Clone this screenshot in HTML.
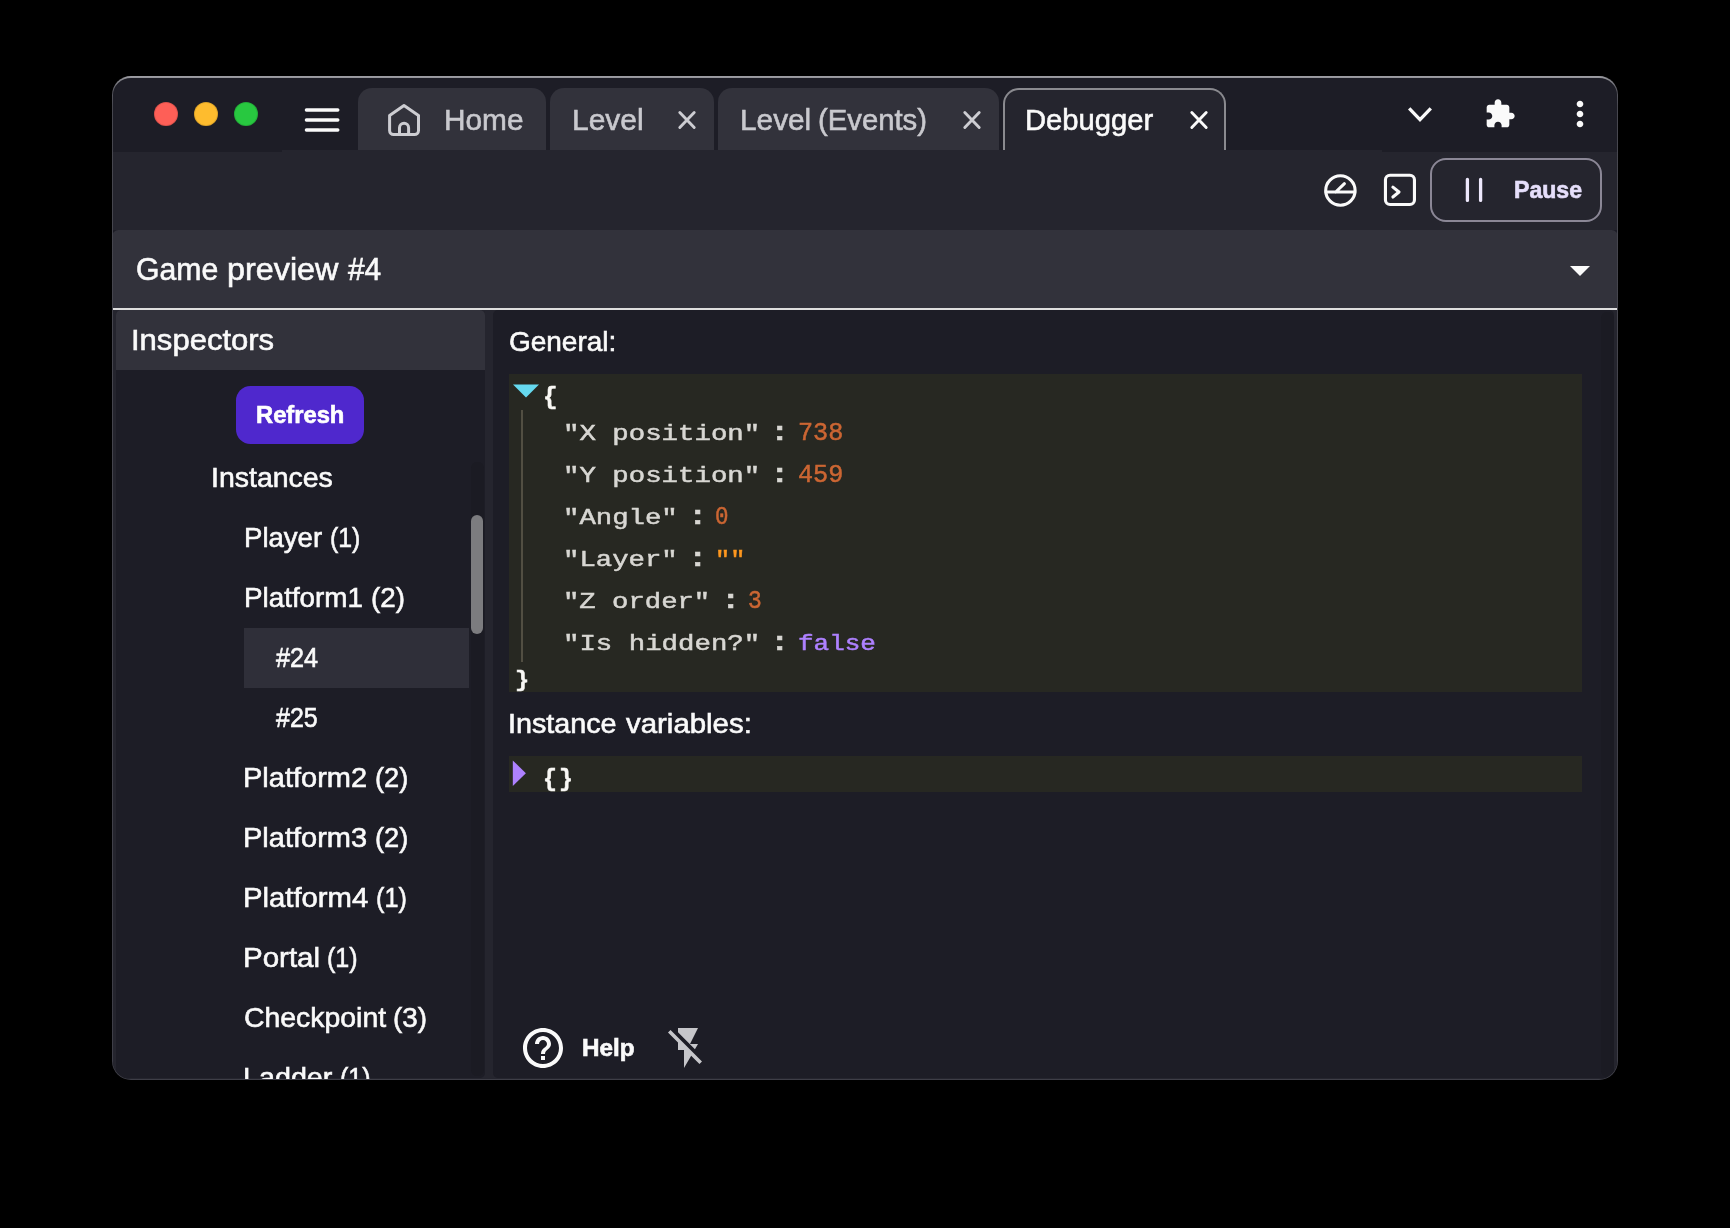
<!DOCTYPE html>
<html lang="en">
<head>
<meta charset="utf-8">
<title>GDevelop - Debugger</title>
<style>
html,body{margin:0;padding:0;background:#000;}
body{width:1730px;height:1228px;position:relative;overflow:hidden;font-family:"Liberation Sans",sans-serif;}
#win{position:absolute;left:112px;top:76px;width:1506px;height:1004px;border-radius:19px;overflow:hidden;background:linear-gradient(to bottom,#A0A0A6 0px,#8A8A90 3px,#5A5A62 14px,#47474F 30px,#3E3E47 100%);}
#clip{position:absolute;left:1px;top:2px;right:1px;bottom:1px;border-radius:18px 18px 18px 18px / 17px 17px 18px 18px;overflow:hidden;background:#1D1D26;}
#in{position:absolute;left:-113px;top:-78px;width:1730px;height:1228px;will-change:transform;}
#in div,#in svg,#in span{position:absolute;}
.t{white-space:pre;transform-origin:0 0;display:block;}
.s{font-family:"Liberation Sans",sans-serif;-webkit-text-stroke:0.6px currentColor;}
.m{font-family:"Liberation Mono",monospace;-webkit-text-stroke:0.5px currentColor;}
.tab{background:#32323B;top:88px;height:62px;border-radius:14px 14px 0 0;}
</style>
</head>
<body>
<div id="win"><div id="clip"><div id="in">

<!-- toolbar background -->
<div style="left:112px;top:150px;width:1506px;height:80px;background:#25252E"></div>
<!-- title-bar drag regions extend 2px lower -->
<div style="left:112px;top:150px;width:170px;height:2px;background:#1D1D26"></div>
<div style="left:1382px;top:150px;width:236px;height:2px;background:#1D1D26"></div>

<!-- traffic lights -->
<div style="left:154px;top:102px;width:24px;height:24px;border-radius:50%;background:#FE5F57;box-shadow:inset 0 0 0 1px rgba(0,0,0,.12)"></div>
<div style="left:194px;top:102px;width:24px;height:24px;border-radius:50%;background:#FEBC2E;box-shadow:inset 0 0 0 1px rgba(0,0,0,.12)"></div>
<div style="left:234px;top:102px;width:24px;height:24px;border-radius:50%;background:#28C840;box-shadow:inset 0 0 0 1px rgba(0,0,0,.12)"></div>

<!-- hamburger -->
<svg style="left:300px;top:100px" width="44" height="40" viewBox="300 100 44 40"><g stroke="#FAFAFA" stroke-width="3.4" stroke-linecap="round"><path d="M306.4 110H337.8M306.4 120H337.8M306.4 130H337.8"/></g></svg>

<!-- tabs -->
<div class="tab" style="left:358px;width:188px"></div>
<div class="tab" style="left:550px;width:164px"></div>
<div class="tab" style="left:718px;width:280.5px"></div>
<div style="left:1003px;top:88px;width:223px;height:62px;box-sizing:border-box;background:#25252E;border:2px solid #8A8A8F;border-bottom:none;border-radius:16px 16px 0 0"></div>

<!-- home icon -->
<svg style="left:380px;top:98px" width="48" height="44" viewBox="380 98 48 44"><g fill="none" stroke="#CDCDD2" stroke-width="3" stroke-linejoin="round" stroke-linecap="round">
<path d="M389.6 115.6L404 105.6L418.5 115.6V130.6a4 4 0 0 1 -4 4H393.6a4 4 0 0 1 -4 -4Z"/>
<path d="M399.5 134.6V127.8a4.55 4.55 0 0 1 9.1 0V134.6"/></g></svg>

<!-- tab close icons -->
<svg style="left:670px;top:104px" width="34" height="32" viewBox="-17 -16 34 32"><path d="M-7.2 -7.4L7.2 7.4M7.2 -7.4L-7.2 7.4" stroke="#CDCDD2" stroke-width="2.9" stroke-linecap="round"/></svg>
<svg style="left:954.5px;top:104px" width="34" height="32" viewBox="-17 -16 34 32"><path d="M-7.2 -7.4L7.2 7.4M7.2 -7.4L-7.2 7.4" stroke="#CDCDD2" stroke-width="2.9" stroke-linecap="round"/></svg>
<svg style="left:1182px;top:104px" width="34" height="32" viewBox="-17 -16 34 32"><path d="M-7.2 -7.4L7.2 7.4M7.2 -7.4L-7.2 7.4" stroke="#FAFAFA" stroke-width="2.9" stroke-linecap="round"/></svg>

<!-- chevron down -->
<svg style="left:1400px;top:98px" width="40" height="32" viewBox="1400 98 40 32"><path d="M1409.2 108.3L1420 119.6L1430.8 108.3" fill="none" stroke="#FAFAFA" stroke-width="3.3"/></svg>
<!-- extension (puzzle) icon -->
<svg style="left:1484px;top:97.5px" width="32" height="32" viewBox="0 0 24 24"><path fill="#FAFAFA" d="M20.5 11H19V7c0-1.1-.9-2-2-2h-4V3.5C13 2.12 11.88 1 10.5 1S8 2.12 8 3.5V5H4c-1.1 0-1.99.9-1.99 2v3.8H3.5c1.49 0 2.7 1.21 2.7 2.7s-1.21 2.7-2.7 2.7H2V20c0 1.1.9 2 2 2h3.8v-1.5c0-1.49 1.21-2.7 2.7-2.7 1.49 0 2.7 1.21 2.7 2.7V22H17c1.1 0 2-.9 2-2v-4h1.5c1.38 0 2.5-1.12 2.5-2.5S21.88 11 20.5 11z"/></svg>
<!-- more vert -->
<svg style="left:1560px;top:94px" width="40" height="40" viewBox="0 0 24 24"><path fill="#FAFAFA" d="M12 8c1.1 0 2-.9 2-2s-.9-2-2-2-2 .9-2 2 .9 2 2 2zm0 2c-1.1 0-2 .9-2 2s.9 2 2 2 2-.9 2-2-.9-2-2-2zm0 6c-1.1 0-2 .9-2 2s.9 2 2 2 2-.9 2-2-.9-2-2-2z"/></svg>

<!-- toolbar icons -->
<svg style="left:1320px;top:170px" width="42" height="42" viewBox="1320 170 42 42"><g fill="none" stroke="#FAFAFA" stroke-width="3.1" stroke-linecap="round">
<circle cx="1340.4" cy="190.5" r="14.7"/><path d="M1326 192H1354.8M1335.7 192L1344.4 183.7"/></g></svg>
<svg style="left:1380px;top:170px" width="40" height="40" viewBox="1380 170 40 40"><g fill="none" stroke="#FAFAFA" stroke-width="3.1" stroke-linecap="round" stroke-linejoin="round">
<rect x="1385.45" y="175.25" width="29" height="29.3" rx="4.6"/><path d="M1392.9 187.1L1399 192L1392.9 197"/></g></svg>

<!-- pause button -->
<div style="left:1430px;top:158px;width:172px;height:64px;box-sizing:border-box;border:2px solid #8B8796;border-radius:16px"></div>
<svg style="left:1460px;top:172px" width="30" height="36" viewBox="1460 172 30 36"><path d="M1467.4 179.3V200.4M1480.6 179.3V200.4" stroke="#EDE8FC" stroke-width="3.3" stroke-linecap="round"/></svg>

<!-- Game preview selector -->
<div style="left:112px;top:230px;width:1506px;height:78px;background:#32323B;border-radius:6.5px 6.5px 0 0"></div>
<div style="left:112px;top:308px;width:1506px;height:2px;background:#DEDEDE"></div>
<svg style="left:1555.5px;top:246px" width="48" height="48" viewBox="0 0 24 24"><path fill="#FAFAFA" d="M7 10l5 5 5-5z"/></svg>

<!-- editor background / gutters -->
<div style="left:112px;top:310px;width:1506px;height:770px;background:#25252E"></div>
<!-- left panel -->
<div style="left:116px;top:310px;width:369px;height:768px;background:#1D1D26;border-radius:5px"></div>
<div style="left:116px;top:310px;width:369px;height:60px;background:#32323B;border-radius:5px 5px 0 0"></div>
<!-- right panel -->
<div style="left:493px;top:310px;width:1121px;height:768px;background:#1D1D26;border-radius:5px"></div>
<div style="left:1600.5px;top:311.5px;width:13px;height:765px;border-radius:6px;background:#1B1B23"></div>

<!-- refresh button -->
<div style="left:236px;top:386px;width:128px;height:58px;background:#4F28CD;border-radius:14.5px"></div>
<!-- selected row -->
<div style="left:244px;top:628px;width:224.5px;height:60px;background:#2F2F39"></div>
<!-- scrollbar -->
<div style="left:471px;top:462px;width:12.5px;height:614px;border-radius:6px;background:#1B1B23"></div>
<div style="left:471px;top:515px;width:12px;height:119px;border-radius:6px;background:#7C7C7F"></div>

<!-- JSON boxes -->
<div style="left:509px;top:374px;width:1073px;height:318px;background:#272822"></div>
<div style="left:509px;top:756px;width:1073px;height:36px;background:#272822"></div>
<div style="left:521px;top:410px;width:2px;height:252px;background:#524F43"></div>
<svg style="left:509px;top:380px" width="36" height="24" viewBox="509 380 36 24"><path d="M513 384.4H539L526 397.4Z" fill="#66D9EF"/></svg>
<svg style="left:509px;top:756px" width="24" height="36" viewBox="509 756 24 36"><path d="M512.8 760.4L525.9 773.2L512.8 786Z" fill="#AE81FF"/></svg>

<!-- help + flash off -->
<svg style="left:519px;top:1024px" width="48" height="48" viewBox="0 0 24 24"><path fill="#FAFAFA" d="M11 18h2v-2h-2v2zm1-16C6.48 2 2 6.48 2 12s4.48 10 10 10 10-4.48 10-10S17.52 2 12 2zm0 18c-4.41 0-8-3.59-8-8s3.59-8 8-8 8 3.59 8 8-3.59 8-8 8zm0-14c-2.21 0-4 1.79-4 4h2c0-1.1.9-2 2-2s2 .9 2 2c0 2-3 1.75-3 5h2c0-2.25 3-2.5 3-5 0-2.21-1.79-4-4-4z"/></svg>
<svg style="left:664px;top:1024px" width="48" height="48" viewBox="0 0 24 24"><path fill="#C6C6CA" d="M3.27 3L2 4.27l5 5V13h3v9l3.58-6.14L17.73 20 19 18.73 3.27 3zM17 10h-4l4-8H7v2.18l8.46 8.46L17 10z"/></svg>

<span class="t s" style="left:444.21px;top:105.00px;font-size:30px;line-height:30px;font-weight:400;color:#C9C9CE;transform:scaleX(0.9930)">Home</span>
<span class="t s" style="left:572.00px;top:105.00px;font-size:30px;line-height:30px;font-weight:400;color:#C9C9CE;transform:scaleX(0.9980)">Level</span>
<span class="t s" style="left:740.01px;top:105.00px;font-size:30px;line-height:30px;font-weight:400;color:#C9C9CE;transform:scaleX(0.9933)">Level </span>
<span class="t s" style="left:818.02px;top:105.00px;font-size:30px;line-height:30px;font-weight:400;color:#C9C9CE;transform:scaleX(0.9754)">(Events)</span>
<span class="t s" style="left:1025.45px;top:105.00px;font-size:30px;line-height:30px;font-weight:400;color:#FAFAFA;transform:scaleX(0.9740)">Debugger</span>
<span class="t s" style="left:1513.80px;top:179.00px;font-size:23px;line-height:23px;font-weight:700;color:#E6DFFB;transform:scaleX(1.0034)">Pause</span>
<span class="t s" style="left:136.03px;top:254.00px;font-size:31px;line-height:31px;font-weight:400;color:#FAFAFA;transform:scaleX(0.9735)">Game </span>
<span class="t s" style="left:226.91px;top:254.00px;font-size:31px;line-height:31px;font-weight:400;color:#FAFAFA;transform:scaleX(1.0433)">preview </span>
<span class="t s" style="left:348.00px;top:254.00px;font-size:31px;line-height:31px;font-weight:400;color:#FAFAFA;transform:scaleX(0.9638)">#4</span>
<span class="t s" style="left:130.93px;top:325.00px;font-size:30px;line-height:30px;font-weight:400;color:#FAFAFA;transform:scaleX(1.0340)">Inspectors</span>
<span class="t s" style="left:256.17px;top:404.00px;font-size:23px;line-height:23px;font-weight:700;color:#FFFFFF;transform:scaleX(1.0312)">Refresh</span>
<span class="t s" style="left:211.47px;top:464.00px;font-size:28px;line-height:28px;font-weight:400;color:#FAFAFA;transform:scaleX(1.0167)">Instances</span>
<span class="t s" style="left:243.93px;top:524.00px;font-size:28px;line-height:28px;font-weight:400;color:#FAFAFA;transform:scaleX(0.9839)">Player </span>
<span class="t s" style="left:329.91px;top:524.00px;font-size:28px;line-height:28px;font-weight:400;color:#FAFAFA;transform:scaleX(0.8872)">(1)</span>
<span class="t s" style="left:243.61px;top:584.00px;font-size:28px;line-height:28px;font-weight:400;color:#FAFAFA;transform:scaleX(0.9928)">Platform1 </span>
<span class="t s" style="left:371.01px;top:584.00px;font-size:28px;line-height:28px;font-weight:400;color:#FAFAFA;transform:scaleX(0.9907)">(2)</span>
<span class="t s" style="left:276.00px;top:644.00px;font-size:28px;line-height:28px;font-weight:400;color:#FAFAFA;transform:scaleX(0.9015)">#24</span>
<span class="t s" style="left:276.00px;top:704.00px;font-size:28px;line-height:28px;font-weight:400;color:#FAFAFA;transform:scaleX(0.8928)">#25</span>
<span class="t s" style="left:243.43px;top:764.00px;font-size:28px;line-height:28px;font-weight:400;color:#FAFAFA;transform:scaleX(1.0354)">Platform2 </span>
<span class="t s" style="left:374.53px;top:764.00px;font-size:28px;line-height:28px;font-weight:400;color:#FAFAFA;transform:scaleX(0.9719)">(2)</span>
<span class="t s" style="left:243.43px;top:824.00px;font-size:28px;line-height:28px;font-weight:400;color:#FAFAFA;transform:scaleX(1.0354)">Platform3 </span>
<span class="t s" style="left:374.53px;top:824.00px;font-size:28px;line-height:28px;font-weight:400;color:#FAFAFA;transform:scaleX(0.9719)">(2)</span>
<span class="t s" style="left:243.41px;top:884.00px;font-size:28px;line-height:28px;font-weight:400;color:#FAFAFA;transform:scaleX(1.0456)">Platform4 </span>
<span class="t s" style="left:375.50px;top:884.00px;font-size:28px;line-height:28px;font-weight:400;color:#FAFAFA;transform:scaleX(0.8998)">(1)</span>
<span class="t s" style="left:243.39px;top:944.00px;font-size:28px;line-height:28px;font-weight:400;color:#FAFAFA;transform:scaleX(1.0540)">Portal </span>
<span class="t s" style="left:326.70px;top:944.00px;font-size:28px;line-height:28px;font-weight:400;color:#FAFAFA;transform:scaleX(0.8967)">(1)</span>
<span class="t s" style="left:243.59px;top:1004.00px;font-size:28px;line-height:28px;font-weight:400;color:#FAFAFA;transform:scaleX(1.0143)">Checkpoint </span>
<span class="t s" style="left:392.81px;top:1004.00px;font-size:28px;line-height:28px;font-weight:400;color:#FAFAFA;transform:scaleX(0.9938)">(3)</span>
<span class="t s" style="left:243.45px;top:1064.00px;font-size:28px;line-height:28px;font-weight:400;color:#FAFAFA;transform:scaleX(1.0252)">Ladder </span>
<span class="t s" style="left:339.70px;top:1064.00px;font-size:28px;line-height:28px;font-weight:400;color:#FAFAFA;transform:scaleX(0.8967)">(1)</span>
<span class="t s" style="left:508.78px;top:328.00px;font-size:27.5px;line-height:27.5px;font-weight:400;color:#FAFAFA;transform:scaleX(1.0172)">General:</span>
<span class="t s" style="left:508.31px;top:710.00px;font-size:27.5px;line-height:27.5px;font-weight:400;color:#FAFAFA;transform:scaleX(1.0446)">Instance </span>
<span class="t s" style="left:625.90px;top:710.00px;font-size:27.5px;line-height:27.5px;font-weight:400;color:#FAFAFA;transform:scaleX(1.0693)">variables:</span>
<span class="t s" style="left:582.35px;top:1037.00px;font-size:23px;line-height:23px;font-weight:700;color:#FAFAFA;transform:scaleX(1.0535)">Help</span>
<span class="t m" style="left:563.01px;top:424.00px;font-size:22px;line-height:22px;font-weight:400;color:#D8D7D3;transform:scaleX(1.2449)">"X position" </span>
<span class="t m" style="left:770.00px;top:420.00px;font-size:26px;line-height:26px;font-weight:700;color:#D8D7D3;transform:scaleX(1.2400)">: </span>
<span class="t m" style="left:798.19px;top:421.00px;font-size:25px;line-height:25px;font-weight:400;color:#CC6633;transform:scaleX(1.0069)">738</span>
<span class="t m" style="left:563.01px;top:466.00px;font-size:22px;line-height:22px;font-weight:400;color:#D8D7D3;transform:scaleX(1.2449)">"Y position" </span>
<span class="t m" style="left:770.00px;top:462.00px;font-size:26px;line-height:26px;font-weight:700;color:#D8D7D3;transform:scaleX(1.2400)">: </span>
<span class="t m" style="left:798.19px;top:463.00px;font-size:25px;line-height:25px;font-weight:400;color:#CC6633;transform:scaleX(1.0069)">459</span>
<span class="t m" style="left:563.02px;top:508.00px;font-size:22px;line-height:22px;font-weight:400;color:#D8D7D3;transform:scaleX(1.2413)">"Angle" </span>
<span class="t m" style="left:687.60px;top:504.00px;font-size:26px;line-height:26px;font-weight:700;color:#D8D7D3;transform:scaleX(1.2400)">: </span>
<span class="t m" style="left:715.40px;top:505.00px;font-size:25px;line-height:25px;font-weight:400;color:#CC6633;transform:scaleX(0.9000)">0</span>
<span class="t m" style="left:563.02px;top:550.00px;font-size:22px;line-height:22px;font-weight:400;color:#D8D7D3;transform:scaleX(1.2413)">"Layer" </span>
<span class="t m" style="left:687.60px;top:546.00px;font-size:26px;line-height:26px;font-weight:700;color:#D8D7D3;transform:scaleX(1.2400)">: </span>
<span class="t m" style="left:714.70px;top:550.00px;font-size:22px;line-height:22px;font-weight:400;color:#FD971F;transform:scaleX(1.1485)">"" </span>
<span class="t m" style="left:563.02px;top:592.00px;font-size:22px;line-height:22px;font-weight:400;color:#D8D7D3;transform:scaleX(1.2389)">"Z order" </span>
<span class="t m" style="left:720.70px;top:588.00px;font-size:26px;line-height:26px;font-weight:700;color:#D8D7D3;transform:scaleX(1.2400)">: </span>
<span class="t m" style="left:748.38px;top:589.00px;font-size:25px;line-height:25px;font-weight:400;color:#CC6633;transform:scaleX(0.9154)">3</span>
<span class="t m" style="left:563.01px;top:634.00px;font-size:22px;line-height:22px;font-weight:400;color:#D8D7D3;transform:scaleX(1.2449)">"Is hidden?" </span>
<span class="t m" style="left:770.00px;top:630.00px;font-size:26px;line-height:26px;font-weight:700;color:#D8D7D3;transform:scaleX(1.2400)">: </span>
<span class="t m" style="left:798.02px;top:634.00px;font-size:22px;line-height:22px;font-weight:400;color:#AE81FF;transform:scaleX(1.1801)">false</span>
<span class="t m" style="left:542.82px;top:387.33px;font-size:23.19px;line-height:23.19px;font-weight:700;color:#F9F8F5;transform:scaleX(1.0429)">{</span>
<span class="t m" style="left:514.90px;top:668.81px;font-size:22.34px;line-height:22.34px;font-weight:700;color:#F9F8F5;transform:scaleX(1.0618)">}</span>
<span class="t m" style="left:543.21px;top:768.04px;font-size:23.62px;line-height:23.62px;font-weight:700;color:#F9F8F5;transform:scaleX(0.9847)">{</span>
<span class="t m" style="left:559.14px;top:768.04px;font-size:23.62px;line-height:23.62px;font-weight:700;color:#F9F8F5;transform:scaleX(0.9847)">}</span>

</div></div></div>
</body>
</html>
